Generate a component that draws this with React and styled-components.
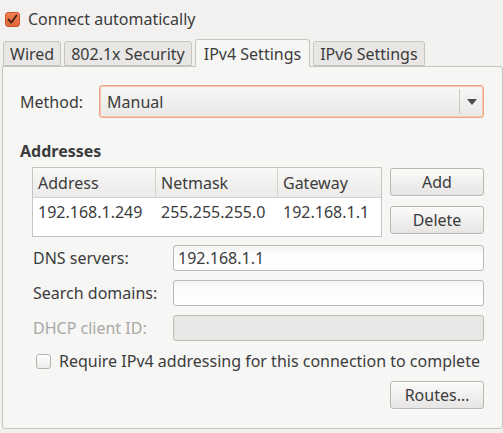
import React from 'react';
import styled, { createGlobalStyle } from 'styled-components';

const Global = createGlobalStyle`
  html, body {
    margin: 0;
    padding: 0;
    background: #f2f1f0;
  }
  body {
    width: 503px;
    height: 433px;
    overflow: hidden;
    font-family: "Noto Sans", "DejaVu Sans", sans-serif;
    font-size: 16px;
    color: #3c3c3c;
  }
`;

const Page = styled.div`
  display: flex;
  flex-direction: column;
  padding: 9px 0 0 2px;
`;

const CheckRow = styled.label`
  display: flex;
  align-items: center;
  gap: 8px;
  height: 20px;
  margin-left: ${p => p.indent || 0}px;
  color: #3c3c3c;
  white-space: nowrap;
`;

const Box = styled.span`
  box-sizing: border-box;
  flex: none;
  width: 15px;
  height: 15px;
  border-radius: 3px;
  display: flex;
  align-items: center;
  justify-content: center;
  border: 1px solid ${p => (p.checked ? '#c9582f' : '#b5b3af')};
  background: ${p => (p.checked ? 'linear-gradient(#f2824f, #e0643a)' : 'linear-gradient(#ffffff, #ecebe9)')};
`;

const Tabs = styled.div`
  display: flex;
  align-items: flex-end;
  gap: 3px;
  margin-top: 10px;
  padding-left: 1px;
  height: 27px;
  position: relative;
  z-index: 1;
`;

const Tab = styled.div`
  box-sizing: border-box;
  height: ${p => (p.active ? 28 : 25)}px;
  padding: 0 ${p => (p.active ? 8 : 6)}px;
  display: flex;
  align-items: center;
  border: 1px solid #c6c4c0;
  border-bottom: ${p => (p.active ? 'none' : '1px solid #c6c4c0')};
  border-radius: 3px 3px 0 0;
  background: ${p => (p.active ? '#f6f6f5' : '#e8e7e5')};
  margin-bottom: ${p => (p.active ? -1 : 0)}px;
  color: #3c3c3c;
  white-space: nowrap;
`;

const Panel = styled.div`
  box-sizing: border-box;
  width: 501px;
  height: 363px;
  background: #f6f6f5;
  border: 1px solid #c6c4c0;
  border-radius: 0 3px 3px 3px;
  padding: 18px 18px 0 16px;
  display: flex;
  flex-direction: column;
`;

const MethodRow = styled.div`
  display: flex;
  align-items: center;
  gap: 16px;
  padding-left: 1px;
`;

const Combo = styled.div`
  box-sizing: border-box;
  flex: 1;
  height: 33px;
  border: 1px solid #f0a384;
  border-radius: 3px;
  background: linear-gradient(#f7f7f6, #e9e8e6);
  box-shadow: inset 0 0 0 1px #f8c7b2;
  display: flex;
  align-items: center;
`;

const ComboText = styled.span`
  flex: 1;
  padding-left: 7px;
`;

const ComboSep = styled.span`
  width: 1px;
  height: 25px;
  background: #c9c7c3;
`;

const Arrow = styled.span`
  width: 23px;
  display: flex;
  justify-content: center;
`;

const SectionTitle = styled.div`
  font-weight: bold;
  margin-top: 22px;
  padding-left: 1px;
  height: 22px;
  line-height: 22px;
`;

const AddrRow = styled.div`
  display: flex;
  gap: 8px;
  margin-top: 5px;
  padding-left: 13px;
`;

const Table = styled.div`
  box-sizing: border-box;
  width: 350px;
  height: 70px;
  background: #ffffff;
  border: 1px solid #c6c4c0;
`;

const HeadRow = styled.div`
  display: grid;
  grid-template-columns: 122px 122px 1fr;
  height: 29px;
  background: linear-gradient(#f8f8f7, #ebeae8);
  border-bottom: 1px solid #d4d2ce;
`;

const HeadCell = styled.div`
  display: flex;
  align-items: center;
  padding-left: 5px;
  border-left: ${p => (p.first ? 'none' : '1px solid #d4d2ce')};
`;

const BodyRow = styled.div`
  display: grid;
  grid-template-columns: 122px 122px 1fr;
  height: 27px;
`;

const Cell = styled.div`
  display: flex;
  align-items: center;
  padding-left: ${p => (p.first ? 5 : 6)}px;
  white-space: nowrap;
`;

const ButtonCol = styled.div`
  display: flex;
  flex-direction: column;
  gap: 10px;
  padding-top: 1px;
`;

const Button = styled.button`
  box-sizing: border-box;
  width: 94px;
  height: 28px;
  font: inherit;
  color: #3c3c3c;
  border: 1px solid #b9b7b3;
  border-radius: 3px;
  background: linear-gradient(#fbfbfa, #e6e5e3);
  box-shadow: 0 1px 0 rgba(255, 255, 255, 0.8);
  padding: 0;
`;

const Fields = styled.div`
  display: grid;
  grid-template-columns: 140px 1fr;
  row-gap: 9px;
  margin-top: 8px;
  padding-left: 14px;
  align-items: center;
`;

const FieldLabel = styled.span`
  color: ${p => (p.disabled ? '#a9a8a6' : '#3c3c3c')};
  white-space: nowrap;
`;

const Input = styled.div`
  box-sizing: border-box;
  height: 26px;
  border: 1px solid #bcbab6;
  border-radius: 3px;
  background: ${p => (p.disabled ? '#e8e7e5' : 'linear-gradient(#f3f3f2, #fdfdfd 40%)')};
  display: flex;
  align-items: center;
  padding-left: 4px;
`;

const RequireRow = styled.div`
  margin-top: 10px;
  padding-left: 17px;
`;

const Footer = styled.div`
  display: flex;
  justify-content: flex-end;
  margin-top: 10px;
`;

const Check = () => (
  <svg width="11" height="11" viewBox="0 0 11 11">
    <path d="M1.5 5.5 L4.3 8.5 L9.5 1.5" fill="none" stroke="#4a2416" strokeWidth="2" strokeLinecap="round" strokeLinejoin="round" />
  </svg>
);

export default function App() {
  return (
    <>
      <Global />
      <Page>
        <CheckRow indent={3}>
          <Box checked><Check /></Box>
          Connect automatically
        </CheckRow>
        <Tabs>
          <Tab>Wired</Tab>
          <Tab>802.1x Security</Tab>
          <Tab active>IPv4 Settings</Tab>
          <Tab>IPv6 Settings</Tab>
        </Tabs>
        <Panel>
          <MethodRow>
            <span>Method:</span>
            <Combo>
              <ComboText>Manual</ComboText>
              <ComboSep />
              <Arrow>
                <svg width="10" height="6" viewBox="0 0 10 6"><path d="M0 0 H10 L5 6 Z" fill="#4c4c4c" /></svg>
              </Arrow>
            </Combo>
          </MethodRow>
          <SectionTitle>Addresses</SectionTitle>
          <AddrRow>
            <Table>
              <HeadRow>
                <HeadCell first>Address</HeadCell>
                <HeadCell>Netmask</HeadCell>
                <HeadCell>Gateway</HeadCell>
              </HeadRow>
              <BodyRow>
                <Cell first>192.168.1.249</Cell>
                <Cell>255.255.255.0</Cell>
                <Cell>192.168.1.1</Cell>
              </BodyRow>
            </Table>
            <ButtonCol>
              <Button>Add</Button>
              <Button>Delete</Button>
            </ButtonCol>
          </AddrRow>
          <Fields>
            <FieldLabel>DNS servers:</FieldLabel>
            <Input>192.168.1.1</Input>
            <FieldLabel>Search domains:</FieldLabel>
            <Input />
            <FieldLabel disabled>DHCP client ID:</FieldLabel>
            <Input disabled />
          </Fields>
          <RequireRow>
            <CheckRow>
              <Box />
              Require IPv4 addressing for this connection to complete
            </CheckRow>
          </RequireRow>
          <Footer>
            <Button>Routes…</Button>
          </Footer>
        </Panel>
      </Page>
    </>
  );
}
